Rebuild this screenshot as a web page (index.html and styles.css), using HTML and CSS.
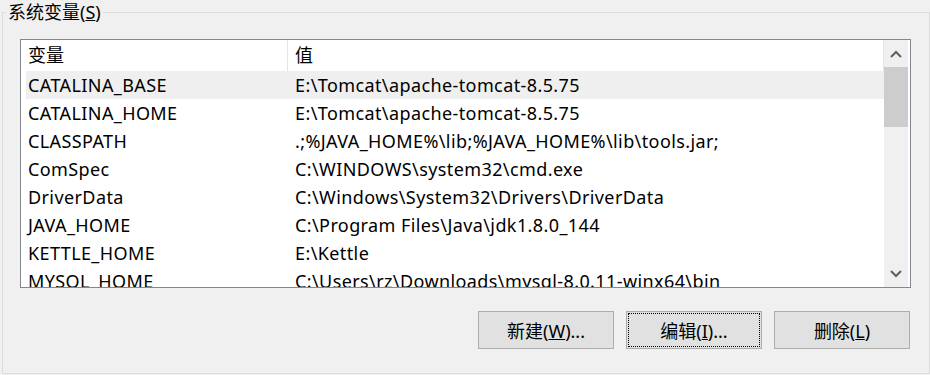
FILE: index.html
```html
<!DOCTYPE html>
<html lang="zh-CN">
<head>
  <meta charset="UTF-8" />
  <title>系统变量</title>
  <link rel="stylesheet" href="styles.css">
</head>
<body>
  <fieldset class="group">
    <legend class="group-title">系统变量(<u>S</u>)</legend>

    <!-- 变量列表 -->
    <div class="listview">
      <div class="list-body">
        <div class="row list-head">
          <span class="col-name">变量</span>
          <span class="col-value">值</span>
        </div>
        <div class="row selected">
          <span class="col-name">CATALINA_BASE</span>
          <span class="col-value">E:\Tomcat\apache-tomcat-8.5.75</span>
        </div>
        <div class="row">
          <span class="col-name">CATALINA_HOME</span>
          <span class="col-value">E:\Tomcat\apache-tomcat-8.5.75</span>
        </div>
        <div class="row">
          <span class="col-name">CLASSPATH</span>
          <span class="col-value">.;%JAVA_HOME%\lib;%JAVA_HOME%\lib\tools.jar;</span>
        </div>
        <div class="row">
          <span class="col-name">ComSpec</span>
          <span class="col-value">C:\WINDOWS\system32\cmd.exe</span>
        </div>
        <div class="row">
          <span class="col-name">DriverData</span>
          <span class="col-value">C:\Windows\System32\Drivers\DriverData</span>
        </div>
        <div class="row">
          <span class="col-name">JAVA_HOME</span>
          <span class="col-value">C:\Program Files\Java\jdk1.8.0_144</span>
        </div>
        <div class="row">
          <span class="col-name">KETTLE_HOME</span>
          <span class="col-value">E:\Kettle</span>
        </div>
        <div class="row">
          <span class="col-name">MYSQL_HOME</span>
          <span class="col-value">C:\Users\rz\Downloads\mysql-8.0.11-winx64\bin</span>
        </div>
      </div>

      <div class="scrollbar">
        <div class="arrow">
          <svg width="12" height="8" viewBox="0 0 12 8"><polyline points="1,7 6,2 11,7" fill="none" stroke="#606060" stroke-width="2"/></svg>
        </div>
        <div class="track">
          <div class="thumb"></div>
        </div>
        <div class="arrow">
          <svg width="12" height="8" viewBox="0 0 12 8"><polyline points="1,1 6,6 11,1" fill="none" stroke="#606060" stroke-width="2"/></svg>
        </div>
      </div>
    </div>

    <div class="buttons">
      <button class="btn">新建(<u>W</u>)...</button>
      <button class="btn focused">编辑(<u>I</u>)...</button>
      <button class="btn">删除(<u>L</u>)</button>
    </div>
  </fieldset>
</body>
</html>
```

FILE: styles.css
```css
body {
  margin: 0;
  background: #f0f0f0;
  font-family: "Noto Sans", "Noto Sans CJK SC", sans-serif;
  font-size: 18px;
  color: #000;
  width: 930px;
  height: 375px;
  overflow: hidden;
}

.group {
  margin: 0 0 0 2px;
  padding: 15px 0 24px 3px;
  border: 1px solid #dcdcdc;
  min-width: 0;
}

.group-title {
  padding: 0 2px;
  line-height: 24px;
  height: 24px;
}

.listview {
  display: flex;
  box-sizing: border-box;
  width: 891px;
  height: 249px;
  margin-left: 14px;
  border: 1px solid #828790;
  background: #fff;
}

.list-body {
  flex: 1;
  padding-left: 5px;
  overflow: hidden;
}

.row {
  display: flex;
  height: 28px;
  line-height: 28px;
  white-space: nowrap;
  letter-spacing: 0.4px;
}

.row.selected {
  background: #efefef;
}

.list-head {
  height: 31px;
  line-height: 30px;
  border-right: 1px solid #e5e5e5;
  letter-spacing: 0;
}

.col-name {
  box-sizing: border-box;
  width: 262px;
  padding-left: 2px;
  flex-shrink: 0;
}

.list-head .col-name {
  border-right: 1px solid #e5e5e5;
}

.col-value {
  padding-left: 7px;
}

.scrollbar {
  width: 24px;
  margin-right: 2px;
  background: #f0f0f0;
  display: flex;
  flex-direction: column;
}

.arrow {
  height: 27px;
  display: flex;
  align-items: center;
  justify-content: center;
}

.track {
  flex: 1;
}

.thumb {
  height: 60px;
  background: #cdcdcd;
}

.buttons {
  display: flex;
  justify-content: flex-end;
  gap: 12px;
  width: 890px;
  margin: 23px 0 0 14px;
}

.btn {
  box-sizing: border-box;
  width: 136px;
  height: 38px;
  background: #e1e1e1;
  border: 1px solid #adadad;
  font-family: inherit;
  font-size: 18px;
  color: #000;
  padding: 0;
}

.btn.focused {
  outline: 1px dotted #000;
  outline-offset: -3px;
}
```
